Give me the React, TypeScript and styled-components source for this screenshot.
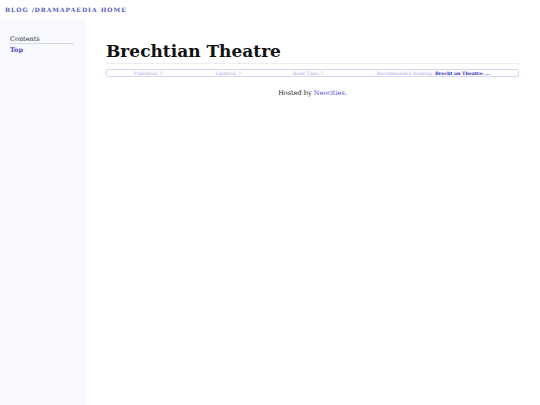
import React from "react";
import { createGlobalStyle, styled } from "styled-components";

const GlobalStyle = createGlobalStyle`
  html, body {
    margin: 0;
    padding: 0;
    background: #ffffff;
    font-family: "DejaVu Serif", serif;
  }
`;

const Page = styled.div`
  display: flex;
  flex-direction: column;
  min-height: 100vh;
`;

const TopBar = styled.header`
  height: 19px;
  display: flex;
  align-items: center;
  padding-left: 5px;
  font-size: 6px;
  font-weight: 600;
  letter-spacing: 1px;
  color: #5656c8;
  white-space: pre;
`;

const Slash = styled.span`
  color: #6b6bd0;
  letter-spacing: 0.5px;
`;

const Body = styled.div`
  flex: 1;
  display: flex;
`;

const Sidebar = styled.nav`
  width: 86px;
  flex-shrink: 0;
  background: #f8f8ff;
  padding: 16px 12px 0 10px;
  box-sizing: border-box;
`;

const SideTitle = styled.div`
  font-size: 6.5px;
  color: #222233;
  border-bottom: 1px solid #d8d8e8;
`;

const SideLink = styled.a`
  display: block;
  margin-top: 2px;
  font-size: 6.5px;
  font-weight: 600;
  color: #4848c0;
  text-decoration: none;
`;

const Main = styled.main`
  flex: 1;
  padding: 23px 21px 0 20px;
`;

const Title = styled.h1`
  margin: 0;
  font-size: 17px;
  line-height: 19px;
  font-weight: bold;
  color: #111;
  padding-bottom: 2px;
  border-bottom: 1px solid #ececf4;
`;

const Meta = styled.div`
  margin-top: 5px;
  display: grid;
  grid-template-columns: 82px 78px 82px 1fr;
  border: 1px solid #d6d6f4;
  border-radius: 2px;
  height: 6px;
  align-items: center;
  font-size: 4.6px;
  color: #a6a6e6;
`;

const MetaCell = styled.span`
  text-align: center;
  white-space: nowrap;
`;

const Strong = styled.b`
  color: #2a2ad0;
`;

const Footer = styled.p`
  margin: 12px 0 0;
  text-align: center;
  font-size: 6.5px;
  color: #222;
`;

const FooterLink = styled.a`
  color: #4848d0;
  text-decoration: none;
`;

const App: React.FC = () => {
  return (
    <Page>
      <GlobalStyle />
      <TopBar>
        BLOG <Slash>/</Slash>DRAMAPAEDIA HOME
      </TopBar>
      <Body>
        <Sidebar>
          <SideTitle>Contents</SideTitle>
          <SideLink href="#">Top</SideLink>
        </Sidebar>
        <Main>
          <Title>Brechtian Theatre</Title>
          <Meta>
            <MetaCell>Published: ?</MetaCell>
            <MetaCell>Updated: ?</MetaCell>
            <MetaCell>Read Time: ?</MetaCell>
            <MetaCell>
              Recommended Reading: <Strong>Brecht on Theatre: ...</Strong>
            </MetaCell>
          </Meta>
          <Footer>
            Hosted by <FooterLink href="#">Neocities</FooterLink>.
          </Footer>
        </Main>
      </Body>
    </Page>
  );
};

export default App;
